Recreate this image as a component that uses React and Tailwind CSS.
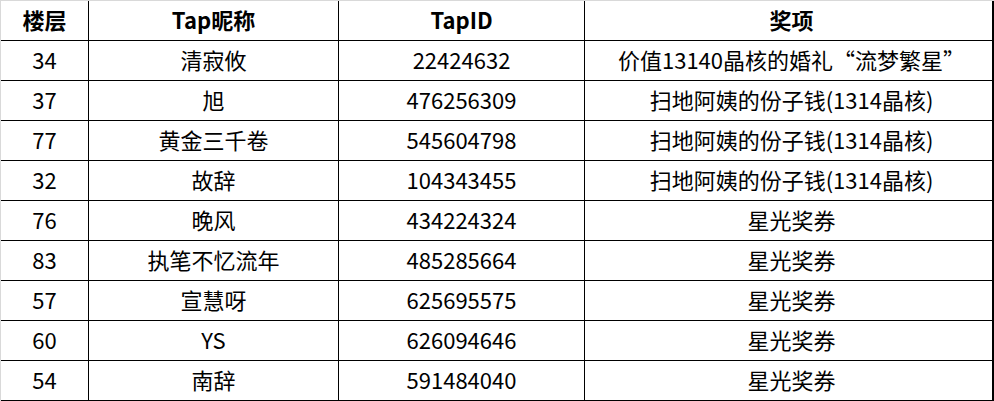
const rows = [
  ["34", "清寂攸", "22424632", "价值13140晶核的婚礼“流梦繁星”"],
  ["37", "旭", "476256309", "扫地阿姨的份子钱(1314晶核)"],
  ["77", "黄金三千卷", "545604798", "扫地阿姨的份子钱(1314晶核)"],
  ["32", "故辞", "104343455", "扫地阿姨的份子钱(1314晶核)"],
  ["76", "晚风", "434224324", "星光奖券"],
  ["83", "执笔不忆流年", "485285664", "星光奖券"],
  ["57", "宣慧呀", "625695575", "星光奖券"],
  ["60", "YS", "626094646", "星光奖券"],
  ["54", "南辞", "591484040", "星光奖券"],
];

const font = "font-['Microsoft_YaHei','Noto_Sans_CJK_SC',sans-serif]";

function Row({ cells }) {
  return (
    <div className="flex h-[40px]">
      <div className="flex w-[88px] items-center justify-center pb-[4px] border-r border-b border-black">{cells[0]}</div>
      <div className="flex w-[250px] items-center justify-center pb-[4px] border-r border-b border-black">{cells[1]}</div>
      <div className="flex w-[246px] items-center justify-center pb-[4px] border-r border-b border-black">{cells[2]}</div>
      <div className="flex w-[409px] items-center justify-center pb-[4px] pl-[6px] border-r-2 border-b border-black">{cells[3]}</div>
    </div>
  );
}

export default function App() {
  return (
    <div className={`w-[994px] h-[401px] bg-white text-black text-[22px] leading-none ${font}`}>
      <div className="border-t border-l border-[#d9d9d9] w-[994px]">
        <div className="font-bold">
          <Row cells={["楼层", "Tap昵称", "TapID", "奖项"]} />
        </div>
        {rows.map((r) => (
          <Row key={r[2]} cells={r} />
        ))}
      </div>
    </div>
  );
}
